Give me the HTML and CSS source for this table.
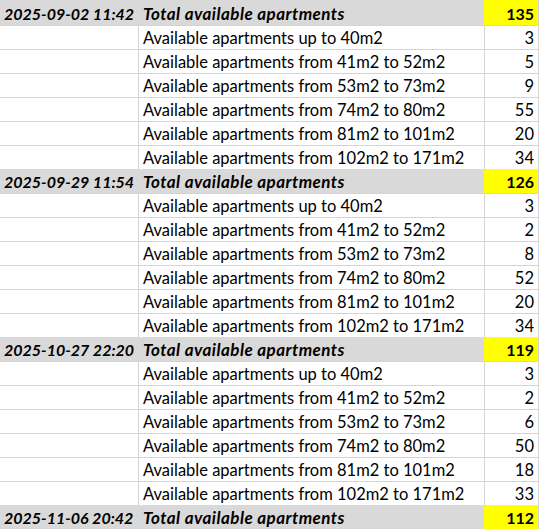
FILE: index.html
```html
<!DOCTYPE html>
<html>
<head>
<meta charset="utf-8">
<link rel="stylesheet" href="styles.css">
</head>
<body>
<div class="sheet">
  <div class="row total"><div class="c a">2025-09-02 11:42</div><div class="c b">Total available apartments</div><div class="c n">135</div></div>
  <div class="row"><div class="c a"></div><div class="c b">Available apartments up to 40m2</div><div class="c n">3</div></div>
  <div class="row"><div class="c a"></div><div class="c b">Available apartments from 41m2 to 52m2</div><div class="c n">5</div></div>
  <div class="row"><div class="c a"></div><div class="c b">Available apartments from 53m2 to 73m2</div><div class="c n">9</div></div>
  <div class="row"><div class="c a"></div><div class="c b">Available apartments from 74m2 to 80m2</div><div class="c n">55</div></div>
  <div class="row"><div class="c a"></div><div class="c b">Available apartments from 81m2 to 101m2</div><div class="c n">20</div></div>
  <div class="row"><div class="c a"></div><div class="c b">Available apartments from 102m2 to 171m2</div><div class="c n">34</div></div>
  <div class="row total"><div class="c a">2025-09-29 11:54</div><div class="c b">Total available apartments</div><div class="c n">126</div></div>
  <div class="row"><div class="c a"></div><div class="c b">Available apartments up to 40m2</div><div class="c n">3</div></div>
  <div class="row"><div class="c a"></div><div class="c b">Available apartments from 41m2 to 52m2</div><div class="c n">2</div></div>
  <div class="row"><div class="c a"></div><div class="c b">Available apartments from 53m2 to 73m2</div><div class="c n">8</div></div>
  <div class="row"><div class="c a"></div><div class="c b">Available apartments from 74m2 to 80m2</div><div class="c n">52</div></div>
  <div class="row"><div class="c a"></div><div class="c b">Available apartments from 81m2 to 101m2</div><div class="c n">20</div></div>
  <div class="row"><div class="c a"></div><div class="c b">Available apartments from 102m2 to 171m2</div><div class="c n">34</div></div>
  <div class="row total"><div class="c a">2025-10-27 22:20</div><div class="c b">Total available apartments</div><div class="c n">119</div></div>
  <div class="row"><div class="c a"></div><div class="c b">Available apartments up to 40m2</div><div class="c n">3</div></div>
  <div class="row"><div class="c a"></div><div class="c b">Available apartments from 41m2 to 52m2</div><div class="c n">2</div></div>
  <div class="row"><div class="c a"></div><div class="c b">Available apartments from 53m2 to 73m2</div><div class="c n">6</div></div>
  <div class="row"><div class="c a"></div><div class="c b">Available apartments from 74m2 to 80m2</div><div class="c n">50</div></div>
  <div class="row"><div class="c a"></div><div class="c b">Available apartments from 81m2 to 101m2</div><div class="c n">18</div></div>
  <div class="row"><div class="c a"></div><div class="c b">Available apartments from 102m2 to 171m2</div><div class="c n">33</div></div>
  <div class="row total"><div class="c a">2025-11-06 20:42</div><div class="c b">Total available apartments</div><div class="c n">112</div></div>
</div>
</body>
</html>
```
FILE: styles.css
```css
html, body {
  margin: 0;
  padding: 0;
  background: #ffffff;
}
.sheet {
  width: 539px;
  font-family: Lato, "Open Sans", sans-serif;
  font-size: 16.5px;
  color: #000000;
}
.row {
  display: grid;
  grid-template-columns: 138px 346px 55px;
  height: 24px;
}
.row:first-child {
  height: 25px;
}
.c {
  box-sizing: border-box;
  border-top: 1px solid #d4d4d4;
  display: flex;
  align-items: flex-end;
  padding: 0 4px 1px 4px;
  white-space: nowrap;
  overflow: hidden;
  line-height: 20px;
}
.row:first-child .c {
  border-top: none;
  padding-top: 1px;
}
.b {
  border-left: 1px solid #d4d4d4;
}
.n {
  border-left: 1px solid #d4d4d4;
  border-right: 1px solid #d4d4d4;
  justify-content: flex-end;
}
.total .c {
  background: #d9d9d9;
  border-color: #d9d9d9;
  font-weight: bold;
  font-style: italic;
}
.total .a {
  font-size: 16px;
}
.total .b {
  font-size: 17px;
  letter-spacing: 0.45px;
}
.total .n {
  background: #ffff00;
  border-top-color: #ffff00;
  border-left-color: #ffff00;
  border-right-color: #d4d4d4;
  font-style: normal;
  font-size: 16px;
}
```
